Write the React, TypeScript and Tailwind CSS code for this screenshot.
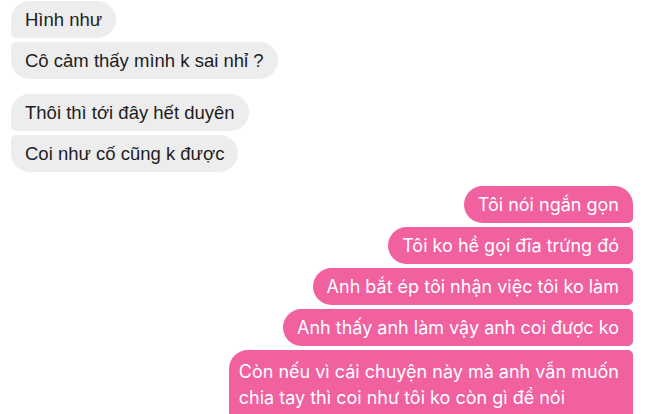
import React from 'react';

const leftMsgs = [
  [
    { text: 'Hình như', shape: 'rounded-[19px] rounded-bl-[5px]' },
    { text: 'Cô cảm thấy mình k sai nhỉ ?', shape: 'rounded-[19px] rounded-tl-[5px]' },
  ],
  [
    { text: 'Thôi thì tới đây hết duyên', shape: 'rounded-[19px] rounded-bl-[5px]' },
    { text: 'Coi như cố cũng k được', shape: 'rounded-[19px] rounded-tl-[5px]' },
  ],
];

const rightMsgs = [
  { text: 'Tôi nói ngắn gọn', shape: 'rounded-[19px] rounded-br-[5px]' },
  { text: 'Tôi ko hề gọi đĩa trứng đó', shape: 'rounded-l-[19px] rounded-r-[5px]' },
  { text: 'Anh bắt ép tôi nhận việc tôi ko làm', shape: 'rounded-l-[19px] rounded-r-[5px]' },
  { text: 'Anh thấy anh làm vậy anh coi được ko', shape: 'rounded-l-[19px] rounded-r-[5px]' },
];

export default function App() {
  return (
    <div className="w-[660px] h-[414px] overflow-hidden bg-white relative">
      <div className="flex flex-col gap-[15px] pl-[11px] pt-[1px]">
        {leftMsgs.map((group, gi) => (
          <div key={gi} className="flex flex-col items-start gap-[4px]">
            {group.map((m, i) => (
              <div
                key={i}
                className={`bg-[#ededed] text-[#1d1d1d] px-[14px] py-[7px] text-[18.5px] leading-[23px] ${m.shape}`}
                style={{ fontFamily: '"Liberation Sans", Arial, sans-serif' }}
              >
                {m.text}
              </div>
            ))}
          </div>
        ))}
      </div>

      <div
        className="flex flex-col items-end gap-[4px] pr-[27px] mt-[14px]"
        style={{ fontFamily: 'Inter, "Noto Sans", sans-serif' }}
      >
        {rightMsgs.map((m, i) => (
          <div
            key={i}
            className={`bg-[#f1609f] text-white px-[14px] py-[8px] text-[18px] leading-[21px] ${m.shape}`}
          >
            {m.text}
          </div>
        ))}
        <div className="bg-[#f1609f] text-white pl-[10px] pr-[14px] pt-[9px] pb-[12px] text-[18px] leading-[26px] rounded-tl-[19px] rounded-tr-[5px]">
          Còn nếu vì cái chuyện này mà anh vẫn muốn
          <br />
          chia tay thì coi như tôi ko còn gì để nói
        </div>
      </div>
    </div>
  );
}
